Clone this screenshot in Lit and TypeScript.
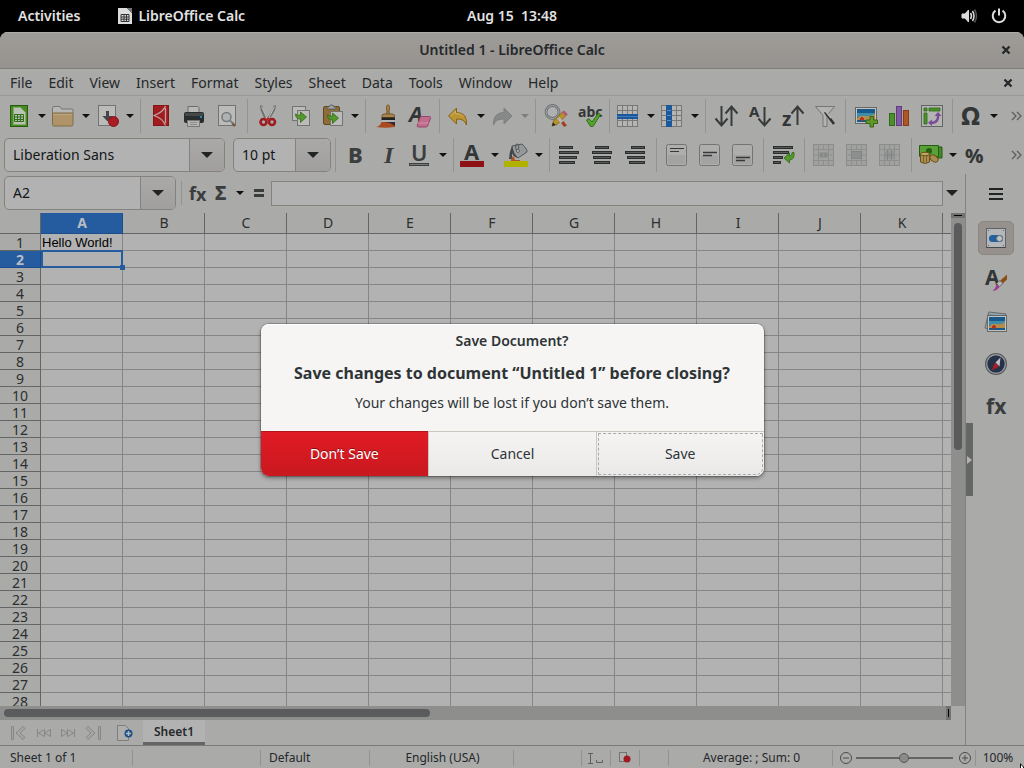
import { LitElement, html, svg, css, nothing, TemplateResult, SVGTemplateResult } from "lit";
import { customElement, property } from "lit/decorators.js";
import { classMap } from "lit/directives/class-map.js";

const paper = (x: number, y: number, w: number, h: number, fill = "#bbbbba") =>
  svg`<rect x=${x + 0.5} y=${y + 0.5} width=${w - 1} height=${h - 1} fill=${fill} stroke="#727472"/>`;

const photo = (x: number, y: number, w: number, h: number) => svg`
  <rect x=${x + 0.5} y=${y + 0.5} width=${w - 1} height=${h - 1} fill="#c2c2c0" stroke="#666866"/>
  <rect x=${x + 2} y=${y + 2} width=${w - 4} height=${h - 4} fill="#17598c"/>
  <rect x=${x + 2} y=${y + 6} width=${w - 4} height="4" fill="#3c8caa"/>
  <path d="M${x + 2} ${y + h - 6}q4-3 8-2t${w - 12}-2v${6}h-${w - 4}z" fill="#b68c4c"/>
  <path d="M${x + 7} ${y + h - 7}v4m-2-2h4" stroke="#b8321c" stroke-width="2"/>`;

const bars = (rows: number[][]) =>
  rows.map(([x, y, w]) => svg`<rect x=${x} y=${y} width=${w} height="3" fill="#2b2e2f"/><rect x=${x + 1} y=${y + 1} width=${w - 2} height="1" fill="#555857"/>`);

const gridLines = (fill: string, line: string) => svg`
  <rect x="1.5" y="1.5" width="20" height="21" fill=${fill} stroke=${line}/>
  <path d="M6.5 1v22M11.5 1v22M16.5 1v22M1 6.5h21M1 11.5h21M1 16.5h21" stroke=${line}/>`;

const glyph = (s: string, x: number, y: number, size: number, extra = "") =>
  svg`<text x=${x} y=${y} font-family="Noto Sans, sans-serif" font-weight="700" font-size=${size} font-style=${extra || "normal"} fill="#333637">${s}</text>`;

const mergeIcon = (inner: SVGTemplateResult) => svg`
  <rect x="2.500" y="1.500" width="20" height="21" fill="#a1a1a0" stroke="#8b8d8c"/>
  <path d="M7.500 1v5M12.500 1v5M17.500 1v5M7.500 18v5M12.500 18v5M17.500 18v5M2 6.500h21M2 17.500h21M2 12h5M18 12h5M7.500 6v12M17.500 6v12" stroke="#8d8f8e"/>
  ${inner}`;

const alignBox = (inner: SVGTemplateResult) => svg`
  <rect x="3.500" y="1.500" width="20" height="21" rx="2" fill="#aeaead" stroke="#727473"/>
  <rect x="5" y="12" width="17" height="9" fill="#a3a3a2"/>${inner}`;

const icons: Record<string, SVGTemplateResult> = {
  newSheet: svg`
    <rect x="3.500" y="1.500" width="17" height="21" fill="#4a8a22" stroke="#255c10"/>
    <path d="M6.500 3.500h7l5 5v12h-12z" fill="#bcc2b8" stroke="#82a86a"/>
    <path d="M7.500 10.500h9v7h-9zM7.500 13h9M7.500 15.500h9M10.500 10.500v7M13.500 10.500v7" fill="#b8bab6" stroke="#2f7014"/>`,
  open: svg`
    <path d="M1.500 8v-4q0-1.500 1.500-1.500h6l1.500 2.500h10.500q1 0 1 1v5h-20.500z" fill="#b6b6b4" stroke="#777876"/>
    <path d="M1.500 9h20.500v11.500q0 1.500-1.500 1.500h-17.500q-1.500 0-1.500-1.500z" fill="#ae9468" stroke="#806c46"/>
    <path d="M2 10.500h19.500" stroke="#bca87f"/>`,
  save: svg`
    ${paper(3, 1, 18, 21)}
    <path d="M11 7h3v5h3.500l-5 5.500-5-5.500h3.500z" fill="#444648"/>
    <circle cx="18.500" cy="17.500" r="5" fill="#a81e24" stroke="#861419"/>`,
  pdf: svg`
    <rect x="6.500" y="1.500" width="15" height="20" fill="#a01c1f" stroke="#851417"/>
    <path d="M18.500 2q-2 6-11.500 9.500q9 3 11.500 10M18.500 4v15" fill="none" stroke="#bfa0a0" stroke-width="1.300"/>`,
  print: svg`
    <path d="M8 9v-6.500h10l1 1v5.500z" fill="#b8b8b7" stroke="#6b6d6c"/>
    <rect x="4" y="8" width="20" height="11" rx="2" fill="#2a2d2e"/>
    <rect x="5" y="9" width="18" height="3" fill="#454849"/>
    <rect x="20" y="12" width="2" height="2" fill="#2488b8"/>
    <rect x="7.500" y="16.500" width="12" height="6" fill="#b6b6b5" stroke="#777978"/>
    <path d="M10 18.500h7M10 20.500h7" stroke="#8b8c8b"/>`,
  preview: svg`
    ${paper(5, 1, 18, 21)}
    <circle cx="13.500" cy="13" r="4.500" fill="#afb1b3" stroke="#777a7c" stroke-width="1.500"/>
    <path d="M17 16.500l3 3" stroke="#7c7e7f" stroke-width="2"/><path d="M19.500 19.500l2.500 2.500" stroke="#7a5a40" stroke-width="2.500"/>`,
  cut: svg`
    <path d="M7.500 1.500q-1 3 4 12M20.500 1.500q1 3-5.500 12" fill="none" stroke="#6d7070" stroke-width="2.600"/>
    <path d="M7.500 2.500l5.500 12M20.500 2.500l-6 12" stroke="#bdbdbc"/>
    <circle cx="9.500" cy="18" r="3" fill="none" stroke="#9e1b20" stroke-width="2.600"/>
    <circle cx="18" cy="18" r="3" fill="none" stroke="#9e1b20" stroke-width="2.600"/>
    <path d="M12 15l2-2 2 2-2 2z" fill="#b02a2c"/>`,
  copy: svg`
    ${paper(5, 2, 14, 15)}${paper(10, 6, 13, 16)}
    <path d="M8.500 10q0 5 5 5v3.500l6-5.500-6-5v3q-3 1-5-1z" fill="#54982c" stroke="#2f6a16" stroke-width=".8"/>`,
  paste: svg`
    <rect x="3.500" y="2.500" width="16" height="18" rx="1.500" fill="#8f6b36" stroke="#614720"/>
    <path d="M7 5v-2h2q0-2 2.500-2t2.500 2h2v2z" fill="#a3a4a3" stroke="#5e605f"/>
    ${paper(10, 7, 13, 15)}
    <path d="M7.500 11q0 5 5 5v3.500l6-5.500-6-5v3q-3 1-5-1z" fill="#54982c" stroke="#2f6a16" stroke-width=".8"/>`,
  brush: svg`
    <path d="M14.500 11l.5-4q-1.500-6 1-6t1 6l.5 4z" fill="#a8824a" stroke="#75582c"/>
    <path d="M10 13.500q-.5-3.500 2-3.500h8.500q2.500 0 2 3.500z" fill="#a98750" stroke="#735629"/>
    <rect x="9.500" y="13.500" width="13.500" height="3" fill="#202324"/><rect x="9.500" y="16" width="13.500" height="2" fill="#b2b4b4"/>
    <path d="M9.500 18h13.500v5q-10 1.500-19 0 4-.500 5.500-5z" fill="#aa4a20"/><path d="M12 18h11v4l-5-3z" fill="#33292a"/>`,
  clearFormat: svg`
    ${glyph("A", 4, 18, 22, "italic")}
    <path d="M15.500 12.500h9q1.500 0 1 1.500l-2.500 7q-.500 2-2 2h-7.500q-2 0-1-2z" fill="#c06d8c" stroke="#97456a"/>
    <path d="M12.500 19h11" stroke="#d292ac"/>`,
  undo: svg`<path d="M2.500 12l8-8v4.500q11 0 10 12.500-2-6.500-10-6v5z" fill="#bc9434" stroke="#876316"/><path d="M4.500 12l5-5v2.500q6 0 8 3" fill="none" stroke="#cfb468"/>`,
  redo: svg`<path d="M22 12l-8-8v4.500q-11 0-10.500 12.500 2-6.500 10.500-6v5z" fill="#868988" stroke="#7c7f7e"/>`,
  find: svg`
    <circle cx="10.500" cy="8" r="6.500" fill="#aeb0b1" stroke="#6e7172" stroke-width="2.800"/><circle cx="10.500" cy="8" r="6.500" fill="none" stroke="#b0b2b2" stroke-width=".8"/>
    <path d="M10 22l1.500-5 10-10 3.500 3.500-10 10z" fill="#b8902c" stroke="#7a5a18" stroke-width=".8"/>
    <path d="M20 8.500l2-2 3.500 3.500-2 2z" fill="#b4567a"/>
    <path d="M15 14.500l2.500-1.500 7 8-3 2z" fill="#b4b4b2"/><path d="M19 19l2.500-2 3.500 4.500-3 1.500z" fill="#9e431e"/><path d="M10 22l1-3.500 2.500 2.500z" fill="#222"/>`,
  spell: svg`${glyph("abc", 3, 13, 14)}<path d="M11.500 16l2.500-1.500 3 3.500 6.500-9 2 1.500-7.500 12h-2.500z" fill="#52a22c" stroke="#32701a"/>`,
  row: svg`${gridLines("#b5b5b4", "#777978")}<rect x="1" y="10" width="21" height="5" fill="#1d579b"/><path d="M1 12.500h21" stroke="#3c7cb8"/>`,
  column: svg`${gridLines("#b5b5b4", "#777978")}<rect x="6" y="1" width="6" height="22" fill="#1d579b"/><path d="M7 6.500h4M7 11.500h4M7 16.500h4" stroke="#5890c0"/>`,
  sort: svg`<path d="M9.500 2v19M3.500 14.500l6 7 6-7M19.500 22V3M13.500 9.500l6-7 6 7" fill="none" stroke="#383b3c" stroke-width="2"/>`,
  sortAsc: svg`${glyph("A", 4, 13, 15)}<path d="M19.500 3v18M13.500 14.500l6 7 6-7" fill="none" stroke="#383b3c" stroke-width="2"/>`,
  sortDesc: svg`${glyph("z", 4, 22, 19)}<path d="M19.500 21V3M13.500 9.500l6-7 6 7" fill="none" stroke="#383b3c" stroke-width="2"/>`,
  filter: svg`<path d="M4.500 2.500h19l-7.500 9v11h-4v-11z" fill="#b2b2b1" stroke="#757776"/><path d="M14 8l9 12" stroke="#2f3233" stroke-width="2.500"/><path d="M12 4l8 10" stroke="#b8b8b7" stroke-width="1.500"/>`,
  image: svg`${photo(3, 3, 22, 17)}<path d="M18 12.500h3.500v3.500h4v3.500h-4v3.500h-3.500v-3.500h-4v-3.500h4z" fill="#64982c" stroke="#32660f"/>`,
  chart: svg`
    <rect x="4.500" y="9.500" width="5" height="12" fill="#4b902a" stroke="#2f6b17"/>
    <rect x="11.500" y="2.500" width="5" height="19" fill="#815ba0" stroke="#5f3a82"/>
    <rect x="18.500" y="6.500" width="5" height="15" fill="#b05526" stroke="#873a15"/>`,
  pivot: svg`
    <rect x="3.500" y="1.500" width="21" height="21" fill="#b4b4b3" stroke="#646665"/>
    <path d="M6 4h3v3h-3zM11 4h11v3h-11zM6 9h3v11h-3z" fill="#4c902a" stroke="#2f6b17" stroke-width=".8"/>
    <path d="M20 10q1 9-7 9" fill="none" stroke="#7a4d96" stroke-width="2.500"/><path d="M16.500 12l3.500-4 3.500 4zM14 15.500v6.500l-4-3.200z" fill="#7a4d96"/>`,
  omega: svg`<text x="2" y="21" font-family="Noto Sans" font-weight="800" font-size="25" fill="#333637">Ω</text>`,
  bold: svg`<text x="6" y="20" font-family="Noto Sans" font-weight="800" font-size="22" fill="#3b3e3f">B</text>`,
  italic: svg`<text x="9" y="20" font-family="Liberation Serif" font-style="italic" font-weight="700" font-size="24" fill="#3b3e3f">I</text>`,
  underline: svg`<text x="3" y="18" font-family="Noto Sans" font-weight="600" font-size="22" fill="#3b3e3f">U</text><rect x="1" y="20" width="20" height="3" fill="#3b3e3f"/><rect x="2" y="21" width="18" height="1" fill="#77797a"/>`,
  fontColor: svg`${glyph("A", 4, 17, 22)}<rect x="0" y="18" width="24" height="6" fill="#8e1214"/>`,
  fill: svg`
    <path d="M8 3l10-2q6 6 5 8l-9 6q-5-3-6-12z" fill="#96999a" stroke="#55585a"/>
    <path d="M8 3q-3 6-3 13h3v-6q1 4 6 5-5-5-6-12z" fill="#44474a"/><path d="M13 9q-3-8 0-8t1 7" fill="none" stroke="#55585a"/><circle cx="14" cy="8" r="1.500" fill="#c2c2c1" stroke="#606263"/>
    <path d="M7 17q1-5 3-3l1 3h5v1h-9z" fill="#ae5520"/>
    <rect x="0" y="18" width="24" height="6" fill="#b1b100"/>`,
  left: svg`${bars([[3, 3, 14], [3, 8, 20], [3, 13, 18], [3, 18, 16]])}`,
  center: svg`${bars([[6, 3, 14], [3, 8, 20], [4, 13, 18], [5, 18, 16]])}`,
  right: svg`${bars([[9, 3, 14], [3, 8, 20], [5, 13, 18], [7, 18, 16]])}`,
  top: alignBox(svg`<path d="M7 5.500h14M7 8.500h9" stroke="#363939"/>`),
  middle: alignBox(svg`<path d="M7 9.500h14M7 12.500h9" stroke="#363939" stroke-width="1.500"/>`),
  bottom: alignBox(svg`<path d="M7 14.500h14M7 17.500h9" stroke="#363939" stroke-width="1.500"/>`),
  wrap: svg`${bars([[3, 3, 20], [3, 8, 16], [3, 13, 10], [3, 18, 8]])}
    <path d="M22 9.500h2q1 7-4.500 7.500v3l-5.500-5 5.500-5v3q3 0 2.500-3.500z" fill="#54982c" stroke="#2f6a16" stroke-width=".8"/>`,
  mergeCenter: mergeIcon(svg`<rect x="8" y="9" width="9" height="6" fill="#939594"/><path d="M11.500 9.500v5l-3-2.500zM13.500 9.500v5l3-2.500z" fill="#828483"/>`),
  merge: mergeIcon(svg`<rect x="7.500" y="8.500" width="10" height="7" fill="#8d8f8e" stroke="#838584"/>`),
  unmerge: mergeIcon(svg`<rect x="8" y="8" width="9" height="8" fill="#939594"/><path d="M10.500 7v10M14.500 7v10M8 12h9" stroke="#838584"/>`),
  currency: svg`
    <path d="M4 4h20v11h-20z" fill="#47892a" stroke="#245c10"/><path d="M1.500 2.500h19v11h-19z" fill="#5aa038" stroke="#245c10"/><circle cx="11" cy="8" r="3" fill="#22600f"/>
    <path d="M2.500 11v8q4.500 3 9 0v-8z" fill="#a98d4e" stroke="#69501e"/><ellipse cx="7" cy="11" rx="4.500" ry="1.800" fill="#c0a766" stroke="#69501e"/><path d="M5.500 13v6.500M8.500 13v6.500" stroke="#7c6330"/>
    <ellipse cx="16" cy="15.500" rx="4.500" ry="3" transform="rotate(35 16 15.500)" fill="#a98d4e" stroke="#69501e"/>`,
  percent: svg`<text x="3" y="20" font-family="Noto Sans" font-weight="800" font-size="20" fill="#333637">%</text>`,
  fx: svg`<text x="2" y="19" font-family="Noto Sans" font-weight="700" font-size="18" fill="#3a3d3e">f<tspan dy="1">x</tspan></text>`,
  sum: svg`<text x="4" y="19" font-family="Noto Sans" font-weight="800" font-size="19" fill="#3a3d3e">Σ</text>`,
  equals: svg`<path d="M9 9.500h10M9 14.500h10" stroke="#3a3d3e" stroke-width="3"/>`,
  menu: svg`<path d="M5 7h14M5 12h14M5 17h14" stroke="#202425" stroke-width="2"/>`,
  properties: svg`<rect x="2.500" y="2.500" width="19" height="19" fill="#b4b7ba" stroke="#5e6266"/><path d="M2 21.500h20" stroke="#45484a"/>
    <rect x="5" y="9" width="14" height="7" rx="3.500" fill="#245f9e"/><circle cx="15.500" cy="12.500" r="3" fill="#c0c2c4" stroke="#6d7072"/>
    <path d="M4 4.500h1M19 4.500h1M4 19.500h1M19 19.500h1" stroke="#606467"/>`,
  styles: svg`${glyph("A", 1, 17, 21)}<path d="M23 6.500v5l-6.500 6-3.500-2z" fill="#8d4d12"/><path d="M16 12.500l3 3-3.500 3-3-3z" fill="#b4b5b6" stroke="#5b5e5f" stroke-width=".8"/><path d="M12.500 16l3 3q-3 4-7 4 3-2 4-7z" fill="#9c3c8c"/>`,
  gallery: svg`<path d="M4 5l1-3 17 2-1 2zM4 5l-3 13 4 1z" fill="#8ea7b4" stroke="#666866"/>${photo(3, 5, 20, 17)}`,
  navigator: svg`<circle cx="12" cy="12" r="10" fill="#26324a" stroke="#55585a" stroke-width="2"/><circle cx="12" cy="12" r="9.300" fill="none" stroke="#9c9fa1" stroke-width="1.200"/>
    <path d="M16.500 5.500l-1 9-4-4z" fill="#bfc0c1"/><path d="M7.500 18.500l3.500-8 4 4z" fill="#aa1e22"/>`,
  functions: svg`<text x="2" y="20" font-family="Noto Sans" font-weight="700" font-size="21" fill="#3a3d3e">fx</text>`,
  volume: svg`<path d="M5 10h3l3.500-4v12l-3.500-4h-3z" fill="#ddd" stroke="#ddd"/><path d="M13.500 9q2 3 0 6M15.500 7q3 5 0 10" fill="none" stroke="#ddd" stroke-width="1.500"/><path d="M17.500 5.500q4 6.500 0 13" fill="none" stroke="#555" stroke-width="1.500"/>`,
  power: svg`<path d="M8.500 6.700a6.300 6.300 0 1 0 7 0M12 4.500v7" fill="none" stroke="#ddd" stroke-width="2"/>`,
  calc: svg`<path d="M6 4h9l5 5v11h-14z" fill="#ddd"/><path d="M15 4h5v5z" fill="#777"/><path d="M9 10.500h8v7h-8zM9 13h8M9 15.200h8M12 10.500v7M14.500 10.500v7" fill="none" stroke="#333"/>`,
  first: svg`<path d="M4.500 5.500h2v13h-2zM16 5.500l2 2-5 4.500 5 4.500-2 2-7-6.500z" fill="#a6a6a5" stroke="#858786"/>`,
  prev: svg`<path d="M5.500 8v8M12.500 8.500l-6 3.500 6 3.500zM18.500 8.500l-6 3.500 6 3.500z" fill="none" stroke="#858786"/>`,
  next: svg`<path d="M17.500 8v8M4.500 8.500l6 3.500-6 3.500zM10.500 8.500l6 3.500-6 3.500z" fill="none" stroke="#858786"/>`,
  last: svg`<path d="M16.500 5.500h2v13h-2zM6 5.500l-2 2 5 4.500-5 4.500 2 2 7-6.500z" fill="#a6a6a5" stroke="#858786"/>`,
  addSheet: svg`<path d="M4.500 4.500h8l3 3v12h-11z" fill="#aeaead" stroke="#7d7f7e"/><circle cx="15.500" cy="12.500" r="4" fill="#1b4f8c"/><path d="M13 12.500h5M15.500 10v5" stroke="#b9bbbc" stroke-width="1.500"/>`,
  insertMode: svg`<path d="M4 7.500h5M6.500 8v9M4 17.500h5M12.500 14v2.500h6v-2.500" fill="none" stroke="#5d605f"/>`,
  modified: svg`<rect x="6.500" y="6.500" width="7" height="9" fill="#b0b0af" stroke="#727473"/><circle cx="14" cy="13" r="3.500" fill="#a01a20"/>`,
  zoomOut: svg`<circle cx="13" cy="12" r="5.500" fill="none" stroke="#4a4d4d"/><path d="M10 12h6" stroke="#4a4d4d" stroke-width="1"/>`,
  zoomIn: svg`<circle cx="13" cy="12" r="5.500" fill="none" stroke="#4a4d4d"/><path d="M10 12h6M13 9v6" stroke="#4a4d4d"/>`,
  close: svg`<path d="M8.500 8.500l7 7M15.500 8.500l-7 7" stroke="#25282a" stroke-width="2.300"/>`,
  more: svg`<path d="M7 8l4 4-4 4M12 8l4 4-4 4" fill="none" stroke="#5c5f60" stroke-width="1.300"/>`,
};

const iconSvg = (name: string) =>
  html`<svg width="24" height="24" viewBox="0 0 24 24" overflow="visible" aria-hidden="true">${icons[name]}</svg>`;

const baseStyles = css`
  * { box-sizing: border-box; }
  button, input { font: inherit; color: inherit; border: 0; margin: 0; padding: 0; background: none; border-radius: 0; }
  button { display: flex; align-items: center; justify-content: center; }
  svg { display: block; flex: none; overflow: visible; }
  .drop::before { content: ""; border: solid transparent; border-width: 4px 4px 0; border-top-color: #111; }
  .drop.dim::before { border-top-color: #7c7f7e; }
`;

interface Tool { icon?: string; label?: string; drop?: boolean; dim?: boolean; }
const t = (icon: string, label: string, drop = false, dim = false): Tool => ({ icon, label, drop, dim });
const sep: Tool = {};

const standardTools: Tool[] = [
  t("newSheet", "New", true), t("open", "Open", true), t("save", "Save", true), sep,
  t("pdf", "Export as PDF"), t("print", "Print"), t("preview", "Print Preview"), sep,
  t("cut", "Cut"), t("copy", "Copy"), t("paste", "Paste", true), sep,
  t("brush", "Clone Formatting"), t("clearFormat", "Clear Formatting"), sep,
  t("undo", "Undo", true), t("redo", "Redo", true, true), sep,
  t("find", "Find and Replace"), t("spell", "Spelling"), sep,
  t("row", "Row", true), t("column", "Column", true), sep,
  t("sort", "Sort"), t("sortAsc", "Sort Ascending"), t("sortDesc", "Sort Descending"), t("filter", "AutoFilter"), sep,
  t("image", "Insert Image"), t("chart", "Insert Chart"), t("pivot", "Insert Pivot Table"), sep,
  t("omega", "Special Character", true),
];

const formatTools: Tool[] = [
  sep, t("bold", "Bold"), t("italic", "Italic"), t("underline", "Underline", true), sep,
  t("fontColor", "Font Color", true), t("fill", "Background Color", true), sep,
  t("left", "Align Left"), t("center", "Center Horizontally"), t("right", "Align Right"), sep,
  t("top", "Align Top"), t("middle", "Center Vertically"), t("bottom", "Align Bottom"), sep,
  t("wrap", "Wrap Text"), sep,
  t("mergeCenter", "Merge and Center"), t("merge", "Merge Cells"), t("unmerge", "Unmerge Cells"), sep,
  t("currency", "Format as Currency", true), t("percent", "Format as Percent"),
];

@customElement("tool-strip")
class ToolStrip extends LitElement {
  @property({ attribute: false }) tools: Tool[] = [];
  static styles = [baseStyles, css`
    :host { display: flex; flex: 1; min-width: 0; align-items: center; }
    .tool { height: 32px; padding: 0 5px 0 4px; flex: none; }
    .drop { width: 11px; height: 32px; flex: none; }
    .sep { width: 1px; height: 34px; margin: 0 2px 0 5px; flex: none; background: #939492; }
    .more { margin-left: auto; margin-right: -5px; flex: none; }
  `];
  render() {
    return html`${this.tools.map((tool) => !tool.icon
      ? html`<span class="sep"></span>`
      : html`<button class="tool" aria-label=${tool.label!}>${iconSvg(tool.icon)}</button>${tool.drop
        ? html`<button class=${classMap({ drop: true, dim: !!tool.dim })} aria-label=${tool.label + " options"}></button>` : nothing}`)}
      <button class="more" aria-label="More controls">${iconSvg("more")}</button>`;
  }
}

@customElement("combo-field")
class ComboField extends LitElement {
  @property() value = "";
  @property() label = "";
  static styles = [baseStyles, css`
    :host { display: flex; height: 34px; border: 1px solid #85827e; border-radius: 5px; background: #b2b2b2; overflow: hidden; flex: none; }
    input { flex: 1; min-width: 0; padding: 0 8px; color: #141618; outline: 0; }
    button { width: 35px; border-left: 1px solid #85827e; background: linear-gradient(#aaa9a7, #a19f9d); }
    button::before { content: ""; border: solid transparent; border-width: 6px 6px 0; border-top-color: #202425; }
  `];
  render() {
    return html`<input aria-label=${this.label} .value=${this.value}><button aria-label=${"Choose " + this.label}></button>`;
  }
}

@customElement("cell-grid")
class CellGrid extends LitElement {
  static styles = [baseStyles, css`
    :host { display: block; overflow: hidden; flex: 1; min-width: 0; background: #b2b2b2; }
    table { table-layout: fixed; border-collapse: separate; border-spacing: 0; width: 1025px; }
    .corner { width: 41px; }
    .col { width: 82px; padding-left: 1px; }
    th, td { padding: 0; }
    th { font-weight: 400; font-size: 14px; color: #2b2f30; background: #aaaaa8; }
    thead th { height: 21px; line-height: 20px; border-right: 1px solid #646665; border-bottom: 1px solid #646665; }
    tbody th { height: 17px; line-height: 14px; padding-top: 2px; border-right: 1px solid #646665; border-bottom: 1px solid #646665; }
    td { height: 17px; line-height: 14px; padding-top: 2px; border-right: 1px solid #868686; border-bottom: 1px solid #868686;
      font-family: "Liberation Sans", Arial, sans-serif; font-size: 13px; color: #000; padding-left: 1px; white-space: nowrap; }
    th.on { background: #255ca0; color: #b8bcc2; font-weight: 700; border-color: #1c4d8c; }
    .active { position: relative; }
    .active::before { content: ""; position: absolute; inset: -1px -1px -1px 0; border: 2px solid #255ca0; }
    .active::after { content: ""; position: absolute; right: -3px; bottom: -3px; width: 5px; height: 5px; background: #255ca0; }
  `];
  render() {
    const cols = [..."ABCDEFGHIJK", ""];
    const rows = Array.from({ length: 28 }, (_, i) => i + 1);
    return html`<table>
      <thead><tr><th class="corner"></th>${cols.map((c) => html`<th class=${classMap({ col: true, on: c === "A" })}>${c}</th>`)}</tr></thead>
      <tbody>${rows.map((r) => html`<tr><th class=${classMap({ on: r === 2 })}>${r}</th>${cols.map((c) => html`<td class=${classMap({ active: r === 2 && c === "A" })}>${r === 1 && c === "A" ? "Hello World!" : nothing}</td>`)}</tr>`)}</tbody>
    </table>`;
  }
}

@customElement("save-dialog")
class SaveDialog extends LitElement {
  static styles = [baseStyles, css`
    dialog { position: static; display: flex; flex-direction: column; width: 503px; max-width: 90vw; margin: 0; padding: 0; border: 0;
      border-radius: 8px; overflow: hidden; background: #f6f5f4; color: #2e3436; text-align: center;
      box-shadow: inset 0 1px #fff, 0 0 0 1px rgba(0,0,0,.2), 0 2px 4px rgba(0,0,0,.4); }
    .title { margin: 0; padding-top: 7px; font-size: 14px; line-height: 20px; font-weight: 600; }
    .lead { margin: 0; padding-top: 10px; font-size: 16px; line-height: 24px; font-weight: 700; }
    .note { margin: 0; padding: 8px 0 18px; font-size: 14px; line-height: 20px; }
    .actions { display: grid; grid-template-columns: 1fr 1fr 1fr; border-top: 1px solid #cdc7c2; }
    .actions button { height: 44px; font-size: 14px; color: #2e3436; background: linear-gradient(#f5f4f3, #ebe9e8); border-left: 1px solid #cdc7c2; }
    .actions .danger { margin-top: -1px; height: 45px; color: #fff; border: 0; border-top: 1px solid #b2161d; background: linear-gradient(#e01b24, #c9181f); text-shadow: 0 -1px rgba(0,0,0,.4); }
    .actions .save { padding: 1px; }
    .focus { display: grid; place-items: center; width: 100%; height: 100%; border: 1px dashed #a7aaa8; border-radius: 1px 1px 7px 1px; }
  `];
  render() {
    return html`<dialog open aria-labelledby="title">
      <h1 class="title" id="title">Save Document?</h1>
      <h2 class="lead">Save changes to document “Untitled 1” before closing?</h2>
      <p class="note">Your changes will be lost if you don’t save them.</p>
      <div class="actions">
        <button class="danger">Don’t Save</button><button>Cancel</button><button class="save"><span class="focus">Save</span></button>
      </div>
    </dialog>`;
  }
}

@customElement("app-root")
class AppRoot extends LitElement {
  static styles = [baseStyles, css`
    :host { display: flex; flex-direction: column; height: 100vh; overflow: hidden; background: #000; font: 14px/20px "Noto Sans", sans-serif; color: #24282a; }
    .topbar { display: grid; grid-template-columns: 1fr auto 1fr; align-items: center; height: 32px; flex: none; color: #e2e2e2; font-weight: 600; white-space: pre; }
    .group { display: flex; align-items: center; }
    .activities { padding: 0 18px; }
    .appname { padding-left: 14px; gap: 2px; }
    .tray { justify-content: flex-end; gap: 6px; padding-right: 13px; }
    .window { position: relative; flex: 1; min-height: 0; display: flex; flex-direction: column; background: #aaaaa8; border-radius: 8px 8px 0 0; overflow: hidden; }
    .titlebar { display: grid; grid-template-columns: 1fr auto 1fr; align-items: center; height: 37px; flex: none; background: linear-gradient(#9e9c98, #96928f); border-bottom: 1px solid #7f7b77; box-shadow: inset 0 1px #aeaca9; font-weight: 600; }
    .titlebar button { justify-self: end; margin-right: 6px; }
    .menubar { display: flex; align-items: center; height: 26px; flex: none; padding: 2px 0 0 2px; }
    .menubar button { padding: 0 8px; height: 24px; }
    .menubar .close { margin-left: auto; padding: 0 4px; }
    .tools { display: flex; align-items: center; height: 40px; flex: none; }
    .standard { border-top: 1px solid #999997; padding-left: 3px; }
    .format { height: 39px; padding-left: 4px; gap: 8px; }
    .font { width: 221px; }
    .size { width: 98px; margin-right: -9px; }
    .workspace { display: flex; flex: 1; min-height: 0; }
    .document { display: flex; flex-direction: column; flex: 1; min-width: 0; }
    .formula { display: flex; align-items: center; height: 39px; flex: none; padding: 0 0 1px 4px; }
    .name { width: 172px; }
    .sep { width: 1px; height: 24px; margin: 0 5px; background: #939492; }
    .formula .drop { width: 10px; }
    .line { flex: 1; min-width: 0; height: 25px; border: 1px solid #85837f; background: #b2b2b2; padding: 0 6px; margin-left: 2px; }
    .formula .expand { width: 22px; padding-right: 4px; }
    .expand::before { content: ""; border: solid transparent; border-width: 6px 6px 0; border-top-color: #202425; }
    .sheet { display: flex; flex: 1; min-height: 0; }
    .vscroll { display: flex; flex-direction: column; align-items: center; width: 14px; background: #8e8e8d; }
    .vsplit { display: grid; place-items: center; width: 14px; height: 5px; background: #727272; margin-bottom: 5px; }
    .vsplit::before { content: ""; width: 8px; height: 1px; background: #000; }
    .vthumb { width: 8px; height: 46%; border-radius: 4px; background: #595b5c; }
    .hscroll { display: flex; align-items: center; height: 14px; flex: none; margin-right: 14px; padding-left: 4px; background: #8e8e8d; }
    .hthumb { width: 45%; height: 8px; border-radius: 4px; background: #595b5c; }
    .hsplit { display: grid; place-items: center; width: 5px; height: 14px; margin-left: auto; background: #727272; }
    .hsplit::before { content: ""; width: 1px; height: 8px; background: #000; }
    .tabs { display: flex; align-items: center; height: 25px; flex: none; padding-left: 6px; }
    .tabs button { width: 25px; height: 25px; }
    .tabs .add { width: 37px; }
    .tabs .tab { width: auto; padding: 2px 11px 0; font-size: 12px; font-weight: 600; background: #b2b2b2; border-bottom: 3px solid #636664; }
    .sidebar { display: flex; width: 59px; flex: none; border-left: 1px solid #82837f; }
    .grip { align-self: center; width: 7px; height: 73px; background: #656765; }
    .grip::before { content: ""; border: solid transparent; border-width: 4px 0 4px 5px; border-left-color: #b2b2b2; }
    .deck { display: flex; flex-direction: column; align-items: center; gap: 8px; flex: 1; padding: 3px 5px 0 0; }
    .deck button { width: 36px; height: 34px; border-radius: 5px; border: 1px solid transparent; }
    .deck .menu { margin-bottom: 2px; }
    .deck .on { background: #97918d; border-color: #8c8682; }
    .status { display: flex; align-items: center; height: 23px; flex: none; border-top: 1px solid #7a7a78; padding-top: 1px; font-size: 12px; white-space: nowrap; }
    .cell { display: flex; align-items: center; justify-content: center; height: 16px; border-right: 1px solid #929391; flex: none; }
    .pages { width: 133px; justify-content: flex-start; padding-left: 10px; }
    .spacer { width: 128px; }
    .style { width: 109px; justify-content: flex-start; padding-left: 8px; }
    .lang { width: 144px; padding-left: 2px; }
    .gap { width: 68px; }
    .icon { width: 29px; }
    .stats { flex: 1; min-width: 0; padding-left: 2px; }
    .zoom { width: 143px; padding: 0; }
    .slider { appearance: none; width: 97px; height: 16px; background: linear-gradient(#636564, #636564) center / 100% 2px no-repeat; }
    .slider::-webkit-slider-thumb { appearance: none; width: 10px; height: 10px; border: 1px solid #555857; border-radius: 50%; background: #8a8b8a; }
    .zoom button { width: 22px; }
    .percent { width: 48px; height: 16px; padding-right: 4px; }
    .modal { position: absolute; inset: 0; display: grid; place-items: center; }
    .pointer { position: absolute; right: 0; bottom: 0; }
  `];

  private bar(): TemplateResult {
    return html`<header class="topbar">
      <div class="group"><button class="activities">Activities</button><button class="appname">${iconSvg("calc")}LibreOffice Calc</button></div>
      <span>Aug 15  13:48</span>
      <div class="group tray">${iconSvg("volume")}${iconSvg("power")}</div>
    </header>`;
  }

  render() {
    const menus = ["File", "Edit", "View", "Insert", "Format", "Styles", "Sheet", "Data", "Tools", "Window", "Help"];
    const panels = [["properties", "Properties"], ["styles", "Styles"], ["gallery", "Gallery"], ["navigator", "Navigator"], ["functions", "Functions"]];
    const nav = [["first", "First sheet"], ["prev", "Previous sheet"], ["next", "Next sheet"], ["last", "Last sheet"]];
    return html`${this.bar()}
      <main class="window">
        <div class="titlebar"><span></span><span>Untitled 1 - LibreOffice Calc</span><button aria-label="Close window">${iconSvg("close")}</button></div>
        <nav class="menubar">${menus.map((m) => html`<button>${m}</button>`)}<button class="close" aria-label="Close document">${iconSvg("close")}</button></nav>
        <div class="tools standard"><tool-strip .tools=${standardTools}></tool-strip></div>
        <div class="tools format">
          <combo-field class="font" value="Liberation Sans" label="font name"></combo-field>
          <combo-field class="size" value="10 pt" label="font size"></combo-field>
          <tool-strip .tools=${formatTools}></tool-strip>
        </div>
        <div class="workspace">
          <section class="document">
            <div class="formula">
              <combo-field class="name" value="A2" label="cell name"></combo-field>
              <span class="sep"></span>
              <button aria-label="Function Wizard">${iconSvg("fx")}</button>
              <button aria-label="Select Function">${iconSvg("sum")}</button>
              <button class="drop" aria-label="Function list"></button>
              <button aria-label="Formula">${iconSvg("equals")}</button>
              <input class="line" aria-label="Input line"><button class="expand" aria-label="Expand formula bar"></button>
            </div>
            <div class="sheet"><cell-grid></cell-grid><div class="vscroll"><div class="vsplit"></div><div class="vthumb"></div></div></div>
            <div class="hscroll"><div class="hthumb"></div><div class="hsplit"></div></div>
            <div class="tabs">${nav.map(([i, l]) => html`<button aria-label=${l}>${iconSvg(i)}</button>`)}<button class="add" aria-label="Add sheet">${iconSvg("addSheet")}</button><button class="tab">Sheet1</button></div>
          </section>
          <aside class="sidebar">
            <button class="grip" aria-label="Collapse sidebar"></button>
            <div class="deck"><button class="menu" aria-label="Sidebar settings">${iconSvg("menu")}</button>
              ${panels.map(([i, l]) => html`<button class=${classMap({ on: i === "properties" })} aria-label=${l}>${iconSvg(i)}</button>`)}</div>
          </aside>
        </div>
        <footer class="status">
          <span class="cell pages">Sheet 1 of 1</span><span class="cell spacer"></span><span class="cell style">Default</span>
          <span class="cell lang">English (USA)</span><span class="cell gap"></span>
          <span class="cell icon">${iconSvg("insertMode")}</span><span class="cell icon">${iconSvg("modified")}</span><span class="cell icon"></span>
          <span class="cell stats">Average: ; Sum: 0</span>
          <span class="cell zoom"><button aria-label="Zoom out">${iconSvg("zoomOut")}</button><input class="slider" type="range" min="0" max="100" value="50" aria-label="Zoom"><button aria-label="Zoom in">${iconSvg("zoomIn")}</button></span>
          <button class="percent">100%</button>
        </footer>
        <div class="modal"><save-dialog></save-dialog></div>
        <svg class="pointer" width="4" height="5" viewBox="0 0 4 5" aria-hidden="true"><path d="M0 0l4 4v1h-4z" fill="#111"/><path d="M1 2l2 2v1h-2z" fill="#fff"/></svg>
      </main>`;
  }
}
